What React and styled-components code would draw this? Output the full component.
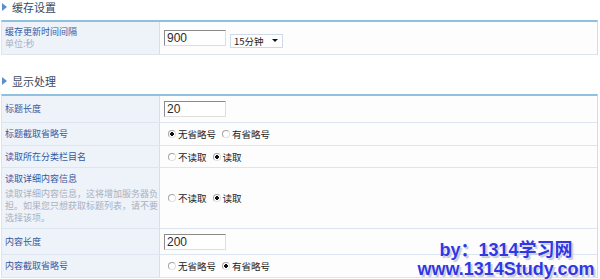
import React from "react";
import styled, { createGlobalStyle } from "styled-components";

const GlobalStyle = createGlobalStyle`
  html, body {
    margin: 0;
    padding: 0;
    background: #ffffff;
  }
  body {
    font-family: "Noto Sans CJK SC", "Noto Sans", sans-serif;
    color: #333;
  }
`;

const Page = styled.div`
  position: relative;
  width: 600px;
  height: 279px;
  overflow: hidden;
`;

const Heading = styled.div`
  display: flex;
  align-items: flex-start;
  height: 20px;
  margin-top: ${(p) => p.$top || 0}px;
  padding-left: 2px;
  font-size: 11px;
  line-height: 14px;
  color: #3a4862;
`;

const Arrow = styled.span`
  width: 0;
  height: 0;
  margin: 3px 5px 0 0;
  border-top: 4px solid transparent;
  border-bottom: 4px solid transparent;
  border-left: 5px solid #5b8fcb;
`;

const Table = styled.div`
  margin-left: 1px;
  width: 597px;
  box-sizing: border-box;
  border-top: 2px solid #8fc0dd;
  border-left: 1px solid #dbe4ef;
  border-right: 1px solid #d2deea;
`;

const Row = styled.div`
  display: grid;
  grid-template-columns: 158px 1fr;
  height: ${(p) => p.$h}px;
  box-sizing: border-box;
  border-bottom: 1px solid #dce5f0;
`;

const LabelCell = styled.div`
  display: flex;
  flex-direction: column;
  justify-content: center;
  padding-left: 3px;
  background: #eef3fa;
  border-right: 1px solid #d6e0ec;
`;

const Label = styled.div`
  font-size: 9px;
  line-height: 12px;
  color: #34589e;
`;

const Desc = styled.div`
  font-size: 9px;
  line-height: 12px;
  color: #a9b1c1;
  margin-top: ${(p) => p.$gap || 0}px;
`;

const ValueCell = styled.div`
  display: flex;
  align-items: center;
  gap: 4px;
  padding-left: 4px;
  background: #fdfdfe;
`;

const TextInput = styled.input`
  width: 62px;
  height: 16px;
  box-sizing: border-box;
  padding: 0 2px;
  border: 1px solid;
  border-color: #8a8a8a #dedede #dedede #8a8a8a;
  background: #fff;
  font-family: "Liberation Sans", Arial, sans-serif;
  font-size: 12px;
  color: #2a2a2a;
  outline: none;
`;

const SelectBox = styled.div`
  display: flex;
  align-items: center;
  justify-content: space-between;
  width: 53px;
  height: 14px;
  margin-top: 5px;
  box-sizing: border-box;
  padding: 0 4px 0 3px;
  border: 1px solid #d0d9e6;
  background: #fff;
  font-size: 9.5px;
  color: #222;
`;

const Caret = styled.span`
  width: 0;
  height: 0;
  border-left: 3px solid transparent;
  border-right: 3px solid transparent;
  border-top: 3px solid #111;
`;

const RadioGroup = styled.div`
  display: flex;
  align-items: center;
  gap: 6px;
  padding-left: 4px;
`;

const RadioItem = styled.label`
  display: inline-flex;
  align-items: center;
  gap: 2px;
  font-size: 9.5px;
  line-height: 12px;
  color: #222;
`;

const Dot = styled.span`
  width: 6px;
  height: 6px;
  border-radius: 50%;
  border: 1px solid #a4a4a4;
  border-right-color: #e0e0e0;
  border-bottom-color: #e0e0e0;
  background: ${(p) =>
    p.$on ? "radial-gradient(circle, #111 0 1.6px, #fff 2px)" : "#fff"};
`;

const Watermark = styled.div`
  position: absolute;
  left: 410px;
  top: 241px;
  width: 192px;
  text-align: center;
  font-family: "Liberation Sans", "Noto Sans CJK SC", sans-serif;
  font-weight: bold;
  font-size: 18px;
  line-height: 19px;
  color: #2f38e4;
  text-shadow: 0 0 2px #fff, 2px 2px 1px #c4c6d4;
`;

function Radios({ options, value }) {
  return (
    <RadioGroup>
      {options.map((o) => (
        <RadioItem key={o}>
          <Dot $on={o === value} />
          {o}
        </RadioItem>
      ))}
    </RadioGroup>
  );
}

export default function App() {
  return (
    <Page>
      <GlobalStyle />
      <Heading>
        <Arrow />
        缓存设置
      </Heading>
      <Table>
        <Row $h={33}>
          <LabelCell>
            <Label>缓存更新时间间隔</Label>
            <Desc>单位:秒</Desc>
          </LabelCell>
          <ValueCell>
            <TextInput defaultValue="900" />
            <SelectBox>
              15分钟
              <Caret />
            </SelectBox>
          </ValueCell>
        </Row>
      </Table>

      <Heading $top={19}>
        <Arrow />
        显示处理
      </Heading>
      <Table>
        <Row $h={27}>
          <LabelCell>
            <Label>标题长度</Label>
          </LabelCell>
          <ValueCell>
            <TextInput defaultValue="20" />
          </ValueCell>
        </Row>
        <Row $h={23}>
          <LabelCell>
            <Label>标题截取省略号</Label>
          </LabelCell>
          <ValueCell>
            <Radios options={["无省略号", "有省略号"]} value="无省略号" />
          </ValueCell>
        </Row>
        <Row $h={22}>
          <LabelCell>
            <Label>读取所在分类栏目名</Label>
          </LabelCell>
          <ValueCell>
            <Radios options={["不读取", "读取"]} value="读取" />
          </ValueCell>
        </Row>
        <Row $h={61}>
          <LabelCell>
            <Label>读取详细内容信息</Label>
            <Desc $gap={3}>
              读取详细内容信息，这将增加服务器负担。如果您只想获取标题列表，请不要选择该项。
            </Desc>
          </LabelCell>
          <ValueCell>
            <Radios options={["不读取", "读取"]} value="读取" />
          </ValueCell>
        </Row>
        <Row $h={26}>
          <LabelCell>
            <Label>内容长度</Label>
          </LabelCell>
          <ValueCell>
            <TextInput defaultValue="200" />
          </ValueCell>
        </Row>
        <Row $h={23}>
          <LabelCell>
            <Label>内容截取省略号</Label>
          </LabelCell>
          <ValueCell>
            <Radios options={["无省略号", "有省略号"]} value="有省略号" />
          </ValueCell>
        </Row>
      </Table>

      <Watermark>
        <div>by：1314学习网</div>
        <div>www.1314Study.com</div>
      </Watermark>
    </Page>
  );
}
